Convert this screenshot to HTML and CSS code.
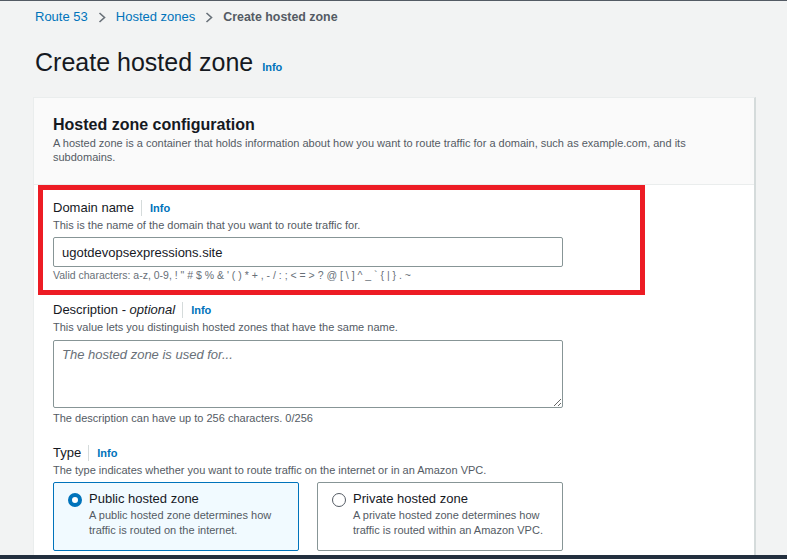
FILE: index.html
```html
<!DOCTYPE html>
<html lang="en">
<head>
<meta charset="utf-8">
<title>Create hosted zone</title>
<link rel="stylesheet" href="styles.css">
</head>
<body>
<div class="page">
  <nav class="crumbs">
    <a class="crumb-link">Route 53</a>
    <svg class="chev" width="8" height="11" viewBox="0 0 8 11"><path d="M1.5 1 L6.5 5.5 L1.5 10" fill="none" stroke="#687078" stroke-width="1.6"/></svg>
    <a class="crumb-link">Hosted zones</a>
    <svg class="chev" width="8" height="11" viewBox="0 0 8 11"><path d="M1.5 1 L6.5 5.5 L1.5 10" fill="none" stroke="#687078" stroke-width="1.6"/></svg>
    <span class="crumb-current">Create hosted zone</span>
  </nav>
  <h1 class="title">Create hosted zone <a class="info info-title">Info</a></h1>

  <section class="card">
    <header class="card-head">
      <h2 class="card-title">Hosted zone configuration</h2>
      <p class="card-desc">A hosted zone is a container that holds information about how you want to route traffic for a domain, such as example.com, and its subdomains.</p>
    </header>
    <div class="card-body">
      <div class="highlight">
        <div class="label-row"><span class="label">Domain name</span><span class="sep"></span><a class="info">Info</a></div>
        <p class="desc">This is the name of the domain that you want to route traffic for.</p>
        <input class="text-input" type="text" value="ugotdevopsexpressions.site">
        <p class="hint">Valid characters: a-z, 0-9, ! " # $ % &amp; ' ( ) * + , - / : ; &lt; = &gt; ? @ [ \ ] ^ _ ` { | } . ~</p>
      </div>

      <div class="field field-desc">
        <div class="label-row"><span class="label">Description - <em>optional</em></span><span class="sep"></span><a class="info">Info</a></div>
        <p class="desc">This value lets you distinguish hosted zones that have the same name.</p>
        <textarea class="text-area" placeholder="The hosted zone is used for..."></textarea>
        <p class="counter">The description can have up to 256 characters. 0/256</p>
      </div>

      <div class="field field-type">
        <div class="label-row"><span class="label">Type</span><span class="sep"></span><a class="info">Info</a></div>
        <p class="desc">The type indicates whether you want to route traffic on the internet or in an Amazon VPC.</p>
        <div class="tiles">
          <div class="tile tile-on">
            <span class="radio radio-on"></span>
            <div class="tile-text">
              <div class="tile-label">Public hosted zone</div>
              <div class="tile-desc">A public hosted zone determines how traffic is routed on the internet.</div>
            </div>
          </div>
          <div class="tile">
            <span class="radio"></span>
            <div class="tile-text">
              <div class="tile-label">Private hosted zone</div>
              <div class="tile-desc">A private hosted zone determines how traffic is routed within an Amazon VPC.</div>
            </div>
          </div>
        </div>
      </div>
    </div>
  </section>
</div>
<div class="footer-bar"></div>
</body>
</html>
```

FILE: styles.css
```css
* { box-sizing: border-box; }
html, body { margin: 0; padding: 0; }
body {
  width: 787px;
  height: 559px;
  overflow: hidden;
  background: #f2f3f3;
  font-family: "Liberation Sans", Arial, sans-serif;
  color: #16191f;
  border-top: 1px solid #545b64;
  display: flex;
  flex-direction: column;
}
.page {
  flex: 1;
  overflow: hidden;
  padding-left: 33px;
}
.crumbs {
  display: flex;
  align-items: center;
  padding: 7px 0 0 2px;
  height: 25px;
  font-size: 13px;
  line-height: 18px;
}
.crumb-link { color: #0073bb; }
.chev { margin: 0 10px; }
.crumb-current { color: #545b64; font-weight: bold; font-size: 12.4px; }
.title {
  margin: 21px 0 0 2px;
  font-size: 25px;
  font-weight: normal;
  line-height: 30px;
  height: 30px;
  color: #16191f;
}
.info {
  color: #0073bb;
  font-weight: bold;
  font-size: 11px;
}
.info-title { margin-left: 2px; }
.card {
  margin-top: 20px;
  width: 723px;
  background: #fff;
  border: 1px solid #eaeded;
  border-right: 2px solid #d5dbdb;
  height: 600px;
}
.card-head {
  background: #fafafa;
  border-bottom: 1px solid #eaeded;
  padding: 17px 20px 20px 19px;
}
.card-title {
  margin: 0;
  font-size: 16px;
  line-height: 20px;
  font-weight: bold;
}
.card-desc {
  margin: 1px 0 0;
  font-size: 11px;
  line-height: 14px;
  color: #545b64;
}
.card-body {
  padding: 0 20px 0 19px;
}
.highlight {
  width: 607px;
  margin-left: -15px;
  border: 5px solid #ed1c24;
  padding: 9px 0 8px 10px;
}
.label-row {
  display: flex;
  align-items: center;
  height: 18px;
}
.label { font-size: 13px; line-height: 18px; }
.label em { font-style: italic; }
.sep {
  width: 1px;
  height: 16px;
  background: #d5dbdb;
  margin: 0 8px 0 7px;
}
.desc {
  margin: 1px 0 0;
  font-size: 11px;
  line-height: 14px;
  color: #545b64;
}
.text-input {
  display: block;
  margin-top: 5px;
  width: 510px;
  height: 30px;
  border: 1px solid #879596;
  border-radius: 2px;
  padding: 0 8px;
  font-family: inherit;
  font-size: 13px;
  color: #16191f;
  background: #fff;
}
.hint {
  margin: 1px 0 0;
  font-size: 10.5px;
  line-height: 14px;
  color: #687078;
}
.field-desc { margin-top: 6px; }
.text-area {
  display: block;
  margin-top: 6px;
  width: 510px;
  height: 68px;
  border: 1px solid #879596;
  border-radius: 2px;
  padding: 6px 8px;
  font-family: inherit;
  font-size: 13px;
  resize: both;
  background: #fff;
}
.text-area::placeholder {
  color: #687078;
  font-style: italic;
}
.counter {
  margin: 3px 0 0;
  font-size: 11px;
  line-height: 14px;
  color: #545b64;
}
.field-type { margin-top: 19px; }
.tiles {
  margin-top: 5px;
  display: grid;
  grid-template-columns: 246px 246px;
  column-gap: 18px;
}
.tile {
  display: flex;
  align-items: flex-start;
  height: 69px;
  border: 1px solid #879596;
  border-radius: 2px;
  padding: 7px 10px 0 14px;
  background: #fff;
}
.tile-on {
  border-color: #0073bb;
  background: #f1faff;
}
.radio {
  flex: none;
  width: 14px;
  height: 14px;
  margin-top: 3px;
  border-radius: 50%;
  border: 1px solid #545b64;
  background: #fff;
}
.radio-on {
  border: 4px solid #0073bb;
}
.tile-text { margin-left: 7px; }
.tile-label {
  font-size: 13px;
  line-height: 18px;
}
.tile-desc {
  font-size: 11px;
  line-height: 15px;
  color: #545b64;
}
.footer-bar {
  flex: none;
  height: 4px;
  background: #232f3e;
}
```
